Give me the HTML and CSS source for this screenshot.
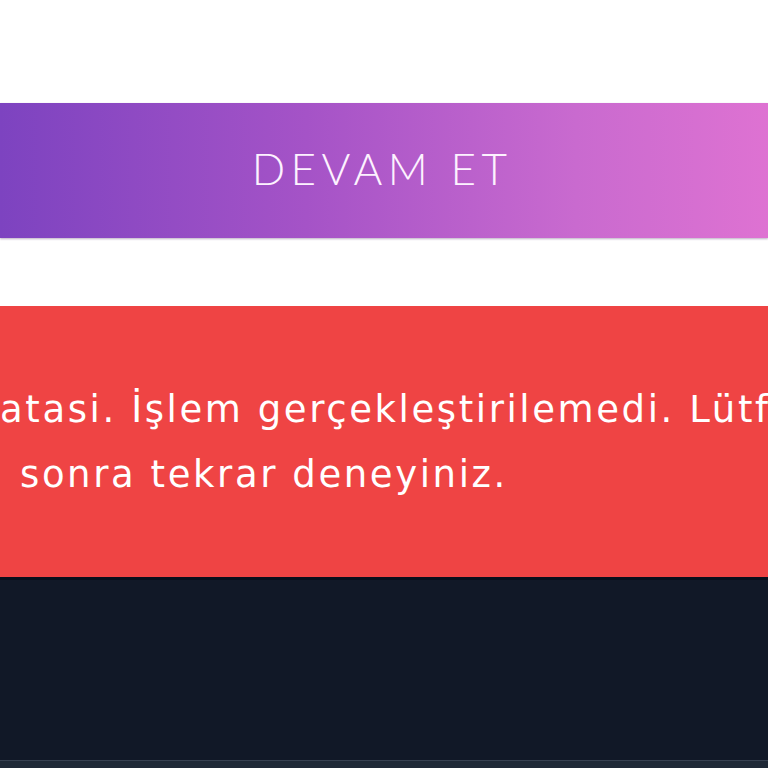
FILE: index.html
```html
<!DOCTYPE html>
<html lang="tr">
<head>
<meta charset="utf-8">
<title>Devam Et</title>
<link rel="stylesheet" href="styles.css">
</head>
<body>
<div class="page">
  <div class="top-space"></div>
  <button class="continue-btn" type="button">DEVAM ET</button>
  <div class="gap"></div>
  <div class="error-box" role="alert">
    <p class="error-line first">atasi. İşlem gerçekleştirilemedi. Lütfen</p>
    <p class="error-line second">sonra tekrar deneyiniz.</p>
  </div>
  <footer class="footer">
    <div class="footer-bar"></div>
  </footer>
</div>
</body>
</html>
```
FILE: styles.css
```css
* { box-sizing: border-box; }
html, body { margin: 0; padding: 0; background: #ffffff; }
body { overflow: hidden; width: 768px; height: 768px; }
.page { display: flex; flex-direction: column; width: 768px; height: 768px; }
.top-space { height: 103px; flex: none; }
.continue-btn {
  flex: none;
  height: 135px;
  width: 100%;
  border: 0;
  margin: 0;
  padding: 0 4px 6px 0;
  background: linear-gradient(90deg, #7d43c0 0%, #a553c7 40%, #c96acf 75%, #de72d2 100%);
  box-shadow: 0 1px 2px rgba(60, 20, 80, 0.35);
  color: #fdf2ff;
  font-family: Lato, "Open Sans", sans-serif;
  font-weight: 300;
  font-size: 44px;
  letter-spacing: 5.4px;
  text-align: center;
}
.gap { height: 68px; flex: none; }
.error-box {
  flex: none;
  height: 271px;
  background: #ef4444;
  display: flex;
  flex-direction: column;
  justify-content: center;
  overflow: hidden;
}
.error-line {
  margin: 0;
  color: #ffffff;
  font-family: "DejaVu Sans", sans-serif;
  font-size: 37px;
  letter-spacing: 2.6px;
  line-height: 65px;
  white-space: nowrap;
}
.error-line.first { padding-left: 0; }
.error-line.second { padding-left: 20px; }
.footer {
  flex: 1;
  background: #111827;
  border-top: 3px solid #0a0f1c;
  display: flex;
  flex-direction: column;
  justify-content: flex-end;
}
.footer-bar {
  height: 8px;
  background: #1f2937;
  border-top: 1px solid #374151;
}
```
